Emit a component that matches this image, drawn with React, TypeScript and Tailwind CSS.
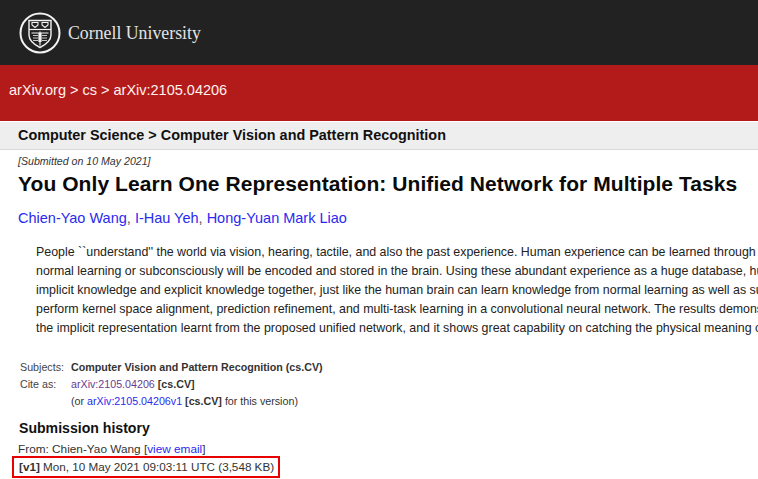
import React from 'react';

const abstractLines = [
  "People ``understand'' the world via vision, hearing, tactile, and also the past experience. Human experience can be learned through normal learning",
  'normal learning or subconsciously will be encoded and stored in the brain. Using these abundant experience as a huge database, human beings can',
  'implicit knowledge and explicit knowledge together, just like the human brain can learn knowledge from normal learning as well as subconsciously',
  'perform kernel space alignment, prediction refinement, and multi-task learning in a convolutional neural network. The results demonstrate that',
  'the implicit representation learnt from the proposed unified network, and it shows great capability on catching the physical meaning of different',
];

function CornellSeal() {
  return (
    <svg width="42" height="42" viewBox="0 0 42 42" fill="none" stroke="#f2f2f2">
      <circle cx="21" cy="21" r="19.5" strokeWidth="2" />
      <path d="M10 8.500h22v14.500c0 6-5 9.500-11 12.500-6-3-11-6.500-11-12.500z" strokeWidth="1.400" />
      <path d="M10 17.500h22" strokeWidth="1.200" />
      <path d="M13 10.500h6v2.500l-3 2.500-3-2.500zM23 10.500h6v2.500l-3 2.500-3-2.500z" strokeWidth="1.100" />
      <path d="M12.500 21h7.500v9M29.500 21h-7.500v9M21 19.500v14" strokeWidth="1.200" />
      <path d="M14 23.500h5M14 26h5M14 28.500h5M23 23.500h5M23 26h5M23 28.500h5" strokeWidth="0.800" />
    </svg>
  );
}

export default function App() {
  return (
    <div className="w-[758px] h-[479px] overflow-hidden bg-white font-['Liberation_Sans',Arial,sans-serif] text-[#1a1a1a]">
      <header className="h-[65px] bg-[#222222] flex items-center pl-[19px] gap-[7px]">
        <CornellSeal />
        <span className="font-['Liberation_Serif',serif] text-[17.800px] text-[#e4e4e4] mt-[1px]">Cornell University</span>
      </header>

      <div className="h-[56px] bg-[#b31b1b] pl-[9px] pt-[16px] text-[14.500px] leading-[18px] text-[#fff2ee]">
        arXiv.org &gt; cs &gt; arXiv:2105.04206
      </div>

      <div className="h-[28px] mt-[1px] bg-[#eeeeee] border-b border-[#d8d8d8] pl-[18px] pt-[4px] text-[14.400px] leading-[18px] font-bold text-[#111111] whitespace-nowrap">
        Computer Science &gt; Computer Vision and Pattern Recognition
      </div>

      <main className="pl-[18px]">
        <p className="mt-[4px] text-[10.600px] leading-[14px] italic text-[#333333]">[Submitted on 10 May 2021]</p>
        <h1 className="mt-[3px] text-[21px] leading-[26px] font-bold text-[#0a0a0a] whitespace-nowrap tracking-[0.07px]">
          You Only Learn One Representation: Unified Network for Multiple Tasks
        </h1>
        <p className="mt-[11px] text-[14.500px] leading-[20px] text-[#555555]">
          <a className="text-[#2a2aee]">Chien-Yao Wang</a>, <a className="text-[#2a2aee]">I-Hau Yeh</a>,{' '}
          <a className="text-[#2a2aee]">Hong-Yuan Mark Liao</a>
        </p>

        <div className="mt-[15px] pl-[18px] text-[12.400px] leading-[19px] text-[#222222] whitespace-nowrap">
          {abstractLines.map((line) => (
            <p key={line}>{line}</p>
          ))}
        </div>

        <div className="mt-[21px] pl-[2px] text-[10.700px] leading-[17px] text-[#333333]">
          <div className="flex">
            <span className="w-[51px] text-[#444444]">Subjects:</span>
            <span className="font-bold">Computer Vision and Pattern Recognition (cs.CV)</span>
          </div>
          <div className="flex">
            <span className="w-[51px] text-[#444444]">Cite as:</span>
            <span>
              <a className="text-[#6b3a8f]">arXiv:2105.04206</a> <b>[cs.CV]</b>
            </span>
          </div>
          <div className="pl-[51px]">
            (or <a className="text-[#2a2aee]">arXiv:2105.04206v1</a> <b>[cs.CV]</b> for this version)
          </div>
        </div>

        <h2 className="mt-[8px] pl-[1px] text-[14.100px] leading-[20px] font-bold text-[#111111]">Submission history</h2>
        <p className="mt-[4px] text-[11.800px] leading-[14px] text-[#333333]">
          From: Chien-Yao Wang [<a className="text-[#2a2aee]">view email</a>]
        </p>
        <p className="-ml-[6px] mt-[0px] w-[268px] h-[22px] border-2 border-[#e60000] pl-[5px] text-[11.700px] leading-[18px] text-[#333333] whitespace-nowrap">
          <b>[v1]</b> Mon, 10 May 2021 09:03:11 UTC (3,548 KB)
        </p>
      </main>
    </div>
  );
}
